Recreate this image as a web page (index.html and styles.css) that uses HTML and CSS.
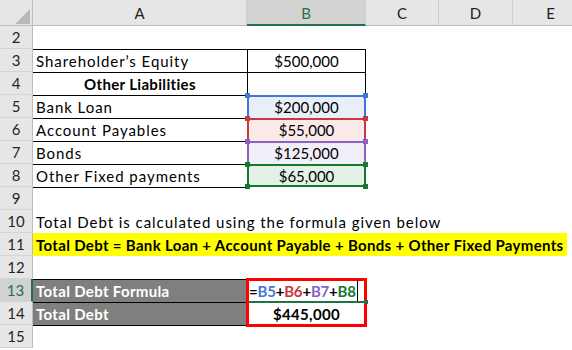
FILE: index.html
```html
<!DOCTYPE html>
<html>
<head>
<meta charset="utf-8">
<link rel="stylesheet" href="styles.css">
</head>
<body>
<div class="sheet">
  <div class="corner"><span class="tri"></span></div>
  <div class="ch">A</div><div class="ch sel">B</div><div class="ch">C</div><div class="ch">D</div><div class="ch">E</div>

  <div class="rh">2</div><div class="c"></div><div class="c"></div><div class="c"></div><div class="c"></div><div class="c"></div>

  <div class="rh">3</div><div class="c t">Shareholder’s Equity</div><div class="c t l r mid num">$500,000</div><div class="c"></div><div class="c"></div><div class="c"></div>

  <div class="rh">4</div><div class="c t mid b">Other Liabilities</div><div class="c t l r"></div><div class="c"></div><div class="c"></div><div class="c"></div>

  <div class="rh">5</div><div class="c t">Bank Loan</div><div class="c hl hl-blue mid num">$200,000<i class="sq tl"></i><i class="sq tr"></i></div><div class="c"></div><div class="c"></div><div class="c"></div>

  <div class="rh">6</div><div class="c t">Account Payables</div><div class="c hl hl-red mid num">$55,000<i class="sq tl"></i><i class="sq tr"></i></div><div class="c"></div><div class="c"></div><div class="c"></div>

  <div class="rh">7</div><div class="c t">Bonds</div><div class="c hl hl-purple mid num">$125,000<i class="sq tl"></i><i class="sq tr"></i></div><div class="c"></div><div class="c"></div><div class="c"></div>

  <div class="rh">8</div><div class="c t">Other Fixed payments</div><div class="c hl hl-green hl-last mid num">$65,000<i class="sq tl"></i><i class="sq tr"></i><i class="sq bl"></i><i class="sq br"></i></div><div class="c"></div><div class="c"></div><div class="c"></div>

  <div class="rh">9</div><div class="c t"></div><div class="c"></div><div class="c"></div><div class="c"></div><div class="c"></div>

  <div class="rh">10</div><div class="c">Total Debt is calculated using the formula given below</div><div class="c"></div><div class="c"></div><div class="c"></div><div class="c"></div>

  <div class="rh">11</div><div class="c yellow b">Total Debt = Bank Loan + Account Payable + Bonds + Other Fixed Payments</div>

  <div class="rh">12</div><div class="c"></div><div class="c"></div><div class="c"></div><div class="c"></div><div class="c"></div>

  <div class="rh rsel">13</div><div class="c t gray b">Total Debt Formula</div><div class="c box-top formula"><span>=</span><span class="ref-blue">B5</span><span>+</span><span class="ref-red">B6</span><span>+</span><span class="ref-purple">B7</span><span>+</span><span class="ref-green">B8</span><span class="caret"></span><i class="active-line"></i><i class="active-sq"></i></div><div class="c"></div><div class="c"></div><div class="c"></div>

  <div class="rh">14</div><div class="c t gray b">Total Debt</div><div class="c box-bot b mid">$445,000</div><div class="c"></div><div class="c"></div><div class="c"></div>

  <div class="rh">15</div><div class="c t"></div><div class="c"></div><div class="c"></div><div class="c"></div><div class="c"></div>
</div>
</body>
</html>
```

FILE: styles.css
```css
html, body {
  margin: 0;
  padding: 0;
  background: #fff;
  overflow: hidden;
}

.sheet {
  display: grid;
  grid-template-columns: 33px 214px 119px 73px 74px 76px;
  grid-template-rows: 26px repeat(14, 23px);
  width: 589px;
  font-family: Lato, "Liberation Sans", sans-serif;
  font-size: 15px;
  color: #000;
}

.corner {
  box-sizing: border-box;
  background: #e6e6e6;
  border-right: 1px solid #bcbcbc;
  border-bottom: 1px solid #bcbcbc;
  display: flex;
  justify-content: flex-end;
  align-items: flex-end;
  padding: 0 2px 1px 0;
}

.tri {
  width: 15px;
  height: 15px;
  background: #b9b9b9;
  clip-path: polygon(100% 0, 100% 100%, 0 100%);
}

.ch {
  box-sizing: border-box;
  background: #e6e6e6;
  border-right: 1px solid #cdcdcd;
  border-bottom: 1px solid #bcbcbc;
  color: #222;
  display: flex;
  justify-content: center;
  align-items: flex-end;
  padding-bottom: 3px;
}

.ch.sel {
  background: #d2d2d2;
  color: #217346;
  border-bottom: 2px solid #217346;
  padding-bottom: 2px;
}

.rh {
  box-sizing: border-box;
  background: #e6e6e6;
  border-right: 1px solid #bcbcbc;
  border-bottom: 1px solid #d4d4d4;
  color: #262626;
  display: flex;
  justify-content: center;
  align-items: flex-end;
  padding-bottom: 2px;
}

.rh.rsel {
  background: #d2d2d2;
  color: #217346;
  border-right: 2px solid #217346;
}

.c {
  box-sizing: border-box;
  min-width: 0;
  display: flex;
  align-items: flex-end;
  padding: 0 3px 2px;
  white-space: nowrap;
  position: relative;
  letter-spacing: 0.95px;
}

.t { border-top: 1px solid #000; }
.l { border-left: 1px solid #000; }
.r { border-right: 1px solid #000; }
.mid { justify-content: center; }
.b { font-weight: 700; letter-spacing: 0.33px; }
.num { letter-spacing: 0; }

.hl {
  border-top: 2px solid;
  border-left: 2px solid;
  border-right: 2px solid;
}
.hl-last {
  border-bottom: 2px solid;
  padding-bottom: 0;
}

.hl-blue { border-color: #3f78d6; background: #e9eff9; }
.hl-red { border-color: #c8383d; background: #f9e9e9; }
.hl-purple { border-color: #8a63c2; background: #f2eef8; }
.hl-green { border-color: #137b30; background: #e5f1e7; }

.sq {
  position: absolute;
  width: 5px;
  height: 5px;
  z-index: 3;
  background: currentColor;
}
.hl-blue .sq { color: #3f78d6; }
.hl-red .sq { color: #c8383d; }
.hl-purple .sq { color: #8a63c2; }
.hl-green .sq { color: #137b30; }
.sq.tl { left: -4px; top: -4px; }
.sq.tr { right: -4px; top: -4px; }
.sq.bl { left: -4px; bottom: -4px; }
.sq.br { right: -4px; bottom: -4px; }

.yellow {
  grid-column: 2 / 7;
  background: linear-gradient(#ffff00, #ffff00) no-repeat;
  background-size: calc(100% - 22px) 100%;
}

.gray {
  background: #7f7f7f;
  color: #fff;
}

.formula {
  font-weight: 700;
  letter-spacing: -0.2px;
}

.box-top {
  margin: -1px -1px 0 -1px;
  border: 3px solid #ff0000;
  border-bottom: 0;
  padding: 0 0 2px 0;
  z-index: 2;
}

.box-bot {
  margin: 0 -1px -2px -1px;
  border: 3px solid #ff0000;
  border-top: 0;
  padding-bottom: 1px;
  z-index: 1;
}

.ref-blue { color: #3f78d6; }
.ref-red { color: #c8383d; }
.ref-purple { color: #8a63c2; }
.ref-green { color: #137b30; }

.caret {
  display: inline-block;
  width: 1px;
  height: 21px;
  background: #000;
  margin-left: 1px;
  align-self: flex-end;
  margin-bottom: -1px;
}

.active-line {
  position: absolute;
  left: 0;
  right: -3px;
  bottom: -1px;
  height: 2px;
  background: #217346;
}

.active-sq {
  position: absolute;
  right: -4px;
  bottom: -2px;
  width: 4px;
  height: 4px;
  background: #217346;
}
```
